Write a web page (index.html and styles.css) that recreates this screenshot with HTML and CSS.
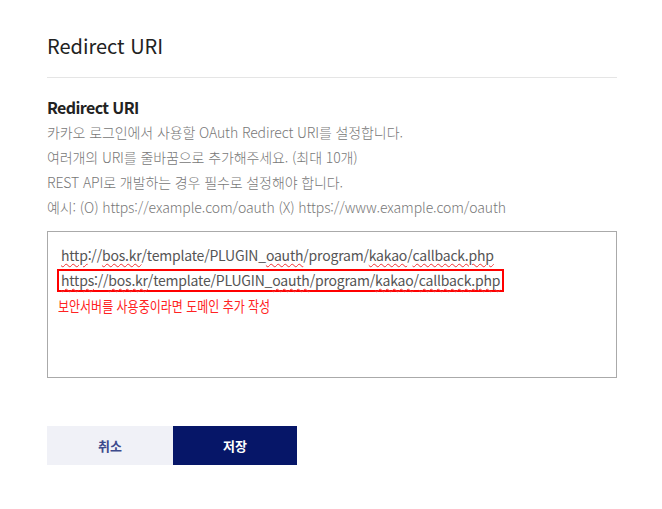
FILE: index.html
```html
<!DOCTYPE html>
<html lang="ko">
<head>
    <meta charset="UTF-8">
    <meta name="viewport" content="width=device-width, initial-scale=1.0">
    <title>Redirect URI</title>
    <link rel="stylesheet" href="styles.css">
</head>
<body>
    <div class="panel">
        <h1 class="panel-title">Redirect URI</h1>

        <div class="section">
            <h2 class="section-title">Redirect URI</h2>
            <p class="desc">카카오 로그인에서 사용할 OAuth Redirect URI를 설정합니다.</p>
            <p class="desc">여러개의 URI를 줄바꿈으로 추가해주세요. (최대 10개)</p>
            <p class="desc">REST API로 개발하는 경우 필수로 설정해야 합니다.</p>
            <p class="desc">예시: (O) https://example.com/oauth (X) https://www.example.com/oauth</p>

            <!-- textarea look-alike, so the spellcheck marks can be drawn -->
            <div class="uri-box">
                <div class="uri-line"><span class="typo">http</span>://<span class="typo">bos.kr</span>/template/PLUGIN_<span class="typo">oauth</span>/program/<span class="typo">kakao</span>/<span class="typo">callback.php</span></div>
                <div class="uri-line"><span class="marked"><span class="typo">https</span>://<span class="typo">bos.kr</span>/template/PLUGIN_<span class="typo">oauth</span>/program/<span class="typo">kakao</span>/<span class="typo">callback.php</span></span></div>
                <div class="note"><span>보안서버를 사용중이라면 도메인 추가 작성</span></div>
            </div>
        </div>

        <div class="actions">
            <button class="btn btn-cancel">취소</button>
            <button class="btn btn-save">저장</button>
        </div>
    </div>
</body>
</html>
```

FILE: styles.css
```css
body {
    margin: 0;
    background: #fff;
    font-family: "Noto Sans CJK KR", "Noto Sans", sans-serif;
    color: #222;
}

.panel {
    width: 570px;
    padding: 31px 0 0 47px;
}

.panel-title {
    margin: 0;
    padding-bottom: 16px;
    font-size: 20px;
    font-weight: 400;
    line-height: 30px;
    color: #222;
    border-bottom: 1px solid #e5e5e5;
}

.section {
    padding-top: 17px;
}

.section-title {
    margin: 0 0 1px;
    font-size: 16px;
    font-weight: 700;
    line-height: 24px;
    letter-spacing: -0.6px;
    color: #222;
}

.desc {
    margin: 0;
    font-size: 14px;
    font-weight: 300;
    line-height: 25px;
    letter-spacing: -0.1px;
    color: #777;
}

.uri-box {
    box-sizing: border-box;
    height: 147px;
    margin-top: 11px;
    padding: 11px 13px;
    border: 1px solid #aaa;
    font-size: 14px;
    line-height: 25px;
    letter-spacing: -0.2px;
    color: #555;
}

.typo {
    text-decoration: underline wavy #e33;
    text-decoration-thickness: 1px;
    text-underline-offset: 2px;
}

.marked {
    display: inline-block;
    margin-left: -4px;
    padding: 0 2px;
    line-height: 19px;
    border: 2px solid #f00;
}

.note {
    margin-left: -3px;
    line-height: 25px;
    color: #f22;
}

.note span {
    display: inline-block;
    font-size: 15px;
    letter-spacing: 0;
    transform: scaleX(0.8);
    transform-origin: left center;
}

.actions {
    display: flex;
    padding-top: 48px;
}

.btn {
    width: 126px;
    height: 39px;
    border: 0;
    font-family: "Noto Sans CJK KR", "Noto Sans", sans-serif;
    font-size: 13px;
    font-weight: 700;
    cursor: pointer;
}

.btn-cancel {
    background: #f0f1f7;
    color: #3d4a8c;
}

.btn-save {
    width: 124px;
    background: #061668;
    color: #fff;
}
```
